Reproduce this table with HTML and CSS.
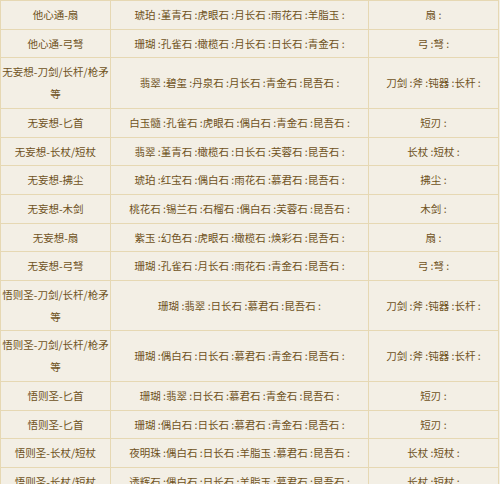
FILE: index.html
```html
<!DOCTYPE html>
<html lang="zh-CN">
<head>
<meta charset="utf-8">
<title>镶嵌表</title>
<link rel="stylesheet" href="styles.css">
</head>
<body>
<table class="gem-table">
  <colgroup><col class="c1"><col class="c2"><col class="c3"></colgroup>
  <tbody>
    <tr><td>他心通-扇</td><td>琥珀 :堇青石 :虎眼石 :月长石 :雨花石 :羊脂玉 :</td><td>扇 :</td></tr>
    <tr><td>他心通-弓弩</td><td>珊瑚 :孔雀石 :橄榄石 :月长石 :日长石 :青金石 :</td><td>弓 :弩 :</td></tr>
    <tr><td>无妄想-刀剑/长杆/枪矛等</td><td>翡翠 :碧玺 :丹泉石 :月长石 :青金石 :昆吾石 :</td><td>刀剑 :斧 :钝器 :长杆 :</td></tr>
    <tr><td>无妄想-匕首</td><td>白玉髓 :孔雀石 :虎眼石 :偶白石 :青金石 :昆吾石 :</td><td>短刃 :</td></tr>
    <tr><td>无妄想-长杖/短杖</td><td>翡翠 :堇青石 :橄榄石 :日长石 :芙蓉石 :昆吾石 :</td><td>长杖 :短杖 :</td></tr>
    <tr><td>无妄想-拂尘</td><td>琥珀 :红宝石 :偶白石 :雨花石 :慕君石 :昆吾石 :</td><td>拂尘 :</td></tr>
    <tr><td>无妄想-木剑</td><td>桃花石 :锡兰石 :石榴石 :偶白石 :芙蓉石 :昆吾石 :</td><td>木剑 :</td></tr>
    <tr><td>无妄想-扇</td><td>紫玉 :幻色石 :虎眼石 :橄榄石 :焕彩石 :昆吾石 :</td><td>扇 :</td></tr>
    <tr><td>无妄想-弓弩</td><td>珊瑚 :孔雀石 :月长石 :雨花石 :青金石 :昆吾石 :</td><td>弓 :弩 :</td></tr>
    <tr><td>悟则圣-刀剑/长杆/枪矛等</td><td>珊瑚 :翡翠 :日长石 :慕君石 :昆吾石 :</td><td>刀剑 :斧 :钝器 :长杆 :</td></tr>
    <tr><td>悟则圣-刀剑/长杆/枪矛等</td><td>珊瑚 :偶白石 :日长石 :慕君石 :青金石 :昆吾石 :</td><td>刀剑 :斧 :钝器 :长杆 :</td></tr>
    <tr><td>悟则圣-匕首</td><td>珊瑚 :翡翠 :日长石 :慕君石 :青金石 :昆吾石 :</td><td>短刃 :</td></tr>
    <tr><td>悟则圣-匕首</td><td>珊瑚 :偶白石 :日长石 :慕君石 :青金石 :昆吾石 :</td><td>短刃 :</td></tr>
    <tr><td>悟则圣-长杖/短杖</td><td>夜明珠 :偶白石 :日长石 :羊脂玉 :慕君石 :昆吾石 :</td><td>长杖 :短杖 :</td></tr>
    <tr><td>悟则圣-长杖/短杖</td><td>透辉石 :偶白石 :日长石 :羊脂玉 :慕君石 :昆吾石 :</td><td>长杖 :短杖 :</td></tr>
  </tbody>
</table>
</body>
</html>
```
FILE: styles.css
```css
html, body {
  margin: 0;
  padding: 0;
  background: #f3efe5;
}
.gem-table {
  border-collapse: collapse;
  width: 498px;
  table-layout: fixed;
  font-family: "Noto Sans CJK SC", "Noto Sans", sans-serif;
  font-size: 10.5px;
  color: #6f521c;
  background: #f3efe5;
}
.gem-table col.c1 { width: 110px; }
.gem-table col.c2 { width: 258px; }
.gem-table col.c3 { width: 130px; }
.gem-table td {
  border: 1px solid #e6d8b3;
  padding: 3px 1px;
  line-height: 21.7px;
  text-align: center;
  vertical-align: middle;
}
```
